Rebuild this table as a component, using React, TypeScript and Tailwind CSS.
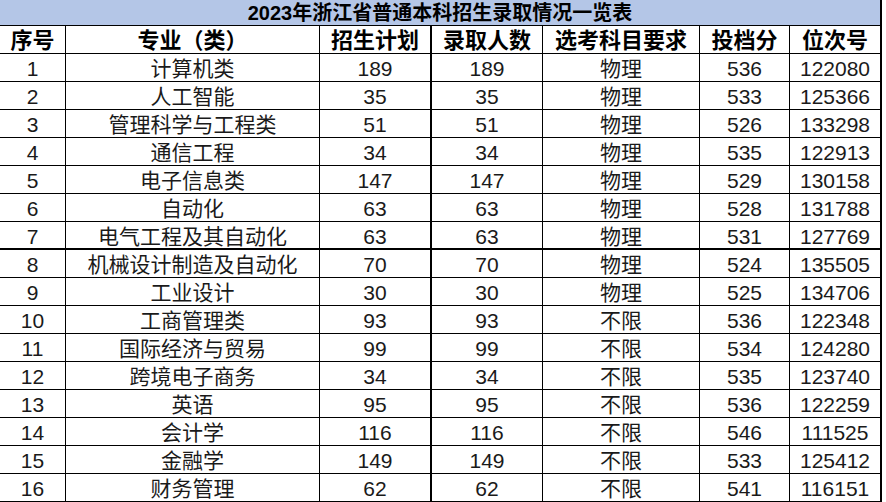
import React from "react";

type Row = [string, string, string, string, string, string, string];

const rows: Row[] = [
  ["1", "计算机类", "189", "189", "物理", "536", "122080"],
  ["2", "人工智能", "35", "35", "物理", "533", "125366"],
  ["3", "管理科学与工程类", "51", "51", "物理", "526", "133298"],
  ["4", "通信工程", "34", "34", "物理", "535", "122913"],
  ["5", "电子信息类", "147", "147", "物理", "529", "130158"],
  ["6", "自动化", "63", "63", "物理", "528", "131788"],
  ["7", "电气工程及其自动化", "63", "63", "物理", "531", "127769"],
  ["8", "机械设计制造及自动化", "70", "70", "物理", "524", "135505"],
  ["9", "工业设计", "30", "30", "物理", "525", "134706"],
  ["10", "工商管理类", "93", "93", "不限", "536", "122348"],
  ["11", "国际经济与贸易", "99", "99", "不限", "534", "124280"],
  ["12", "跨境电子商务", "34", "34", "不限", "535", "123740"],
  ["13", "英语", "95", "95", "不限", "536", "122259"],
  ["14", "会计学", "116", "116", "不限", "546", "111525"],
  ["15", "金融学", "149", "149", "不限", "533", "125412"],
  ["16", "财务管理", "62", "62", "不限", "541", "116151"],
];

const headers = ["序号", "专业（类）", "招生计划", "录取人数", "选考科目要求", "投档分", "位次号"];

// right border per column: the 3rd column and the last one get the heavy line
const colBorder = [
  "border-r",
  "border-r",
  "border-r-2",
  "border-r",
  "border-r",
  "border-r",
  "border-r-2",
];

const App: React.FC = () => {
  return (
    <div
      className="w-[886px] h-[502px] bg-white overflow-hidden text-black"
      style={{ fontFamily: '"Liberation Sans", "Noto Sans CJK SC", sans-serif' }}
    >
      <div className="w-[882px] grid grid-cols-[66px_254px_112px_111px_157px_90px_92px] grid-rows-[26px_28px_repeat(16,28px)]">
        {/* 标题 */}
        <div className="col-span-7 bg-[#b4c6e7] border-b border-r-2 border-black flex items-center justify-center text-[20px] font-bold leading-none">
          2023年浙江省普通本科招生录取情况一览表
        </div>

        {/* 表头 */}
        {headers.map((h, i) => (
          <div
            key={h}
            className={`${colBorder[i]} border-b border-black flex items-center justify-center pt-[2px] text-[22px] font-bold leading-none`}
          >
            {h}
          </div>
        ))}

        {/* 数据 */}
        {rows.map((r, ri) =>
          r.map((cell, ci) => (
            <div
              key={`${ri}-${ci}`}
              className={`${colBorder[ci]} ${ri === 6 ? "border-b-2" : "border-b"} border-black flex items-center justify-center pt-[2px] text-[21px] leading-none text-[#1a1a1a]`}
            >
              {cell}
            </div>
          ))
        )}
      </div>
    </div>
  );
};

export default App;
